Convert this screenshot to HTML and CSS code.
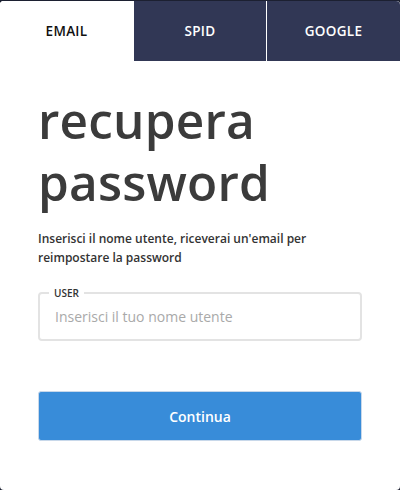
FILE: index.html
```html
<!DOCTYPE html>
<html lang="it">
<head>
<meta charset="utf-8">
<link rel="stylesheet" href="styles.css">
</head>
<body>
<div class="card">
  <nav class="tabs">
    <div class="tab active">EMAIL</div>
    <div class="tab">SPID</div>
    <div class="tab">GOOGLE</div>
  </nav>
  <main class="content">
    <h1 class="title">recupera<br>password</h1>
    <p class="desc">Inserisci il nome utente, riceverai un'email per reimpostare la password</p>
    <fieldset class="field">
      <legend class="field-label">USER</legend>
      <input class="field-input" type="text" placeholder="Inserisci il tuo nome utente">
    </fieldset>
    <button class="btn">Continua</button>
  </main>
</div>
</body>
</html>
```

FILE: styles.css
```css
* { box-sizing: border-box; }
html, body { margin: 0; padding: 0; }
body {
  background: #1c2031;
  width: 400px;
  height: 490px;
  padding-top: 1px;
  font-family: "Open Sans", "Noto Sans", sans-serif;
}
.card {
  background: #fff;
  height: 489px;
  border-radius: 4px;
  overflow: hidden;
}
.tabs {
  display: flex;
  height: 60px;
  gap: 1px;
  background: #fff;
}
.tab {
  flex: 0 0 auto;
  display: flex;
  align-items: center;
  justify-content: center;
  background: #313755;
  color: #fff;
  font-size: 13.5px;
  font-weight: 600;
  letter-spacing: 0.3px;
}
.tab:nth-child(1) { width: 133px; }
.tab:nth-child(2) { width: 132px; }
.tab:nth-child(3) { flex: 1; }
.tab.active { background: #fff; color: #111; }
.content {
  padding: 28px 38px 0 38px;
}
.title {
  margin: 0;
  font-size: 49.5px;
  font-weight: 600;
  line-height: 62px;
  color: #3b3b3b;
  letter-spacing: 0.2px;
}
.desc {
  margin: 16px 0 0 0;
  font-size: 12px;
  font-weight: 600;
  line-height: 19px;
  color: #333;
}
.field {
  margin: 20px 0 0 0;
  padding: 0 15px 0 15px;
  height: 54px;
  border: 2px solid #e3e3e3;
  border-radius: 4px;
}
.field-label {
  padding: 0 5px;
  margin-left: -6px;
  font-size: 10px;
  font-weight: 600;
  color: #333;
  line-height: 12px;
}
.field-input {
  display: block;
  width: 100%;
  border: 0;
  outline: 0;
  padding: 0;
  margin-top: 8px;
  font-family: inherit;
  font-size: 14px;
  color: #333;
  background: transparent;
}
.field-input::placeholder { color: #a9a9a9; }
.btn {
  display: block;
  width: 100%;
  margin-top: 50px;
  height: 50px;
  border: 1px solid #c8d8ea;
  border-radius: 3px;
  background: #388cd9;
  color: #fff;
  font-family: inherit;
  font-size: 14px;
  font-weight: 600;
}
```
